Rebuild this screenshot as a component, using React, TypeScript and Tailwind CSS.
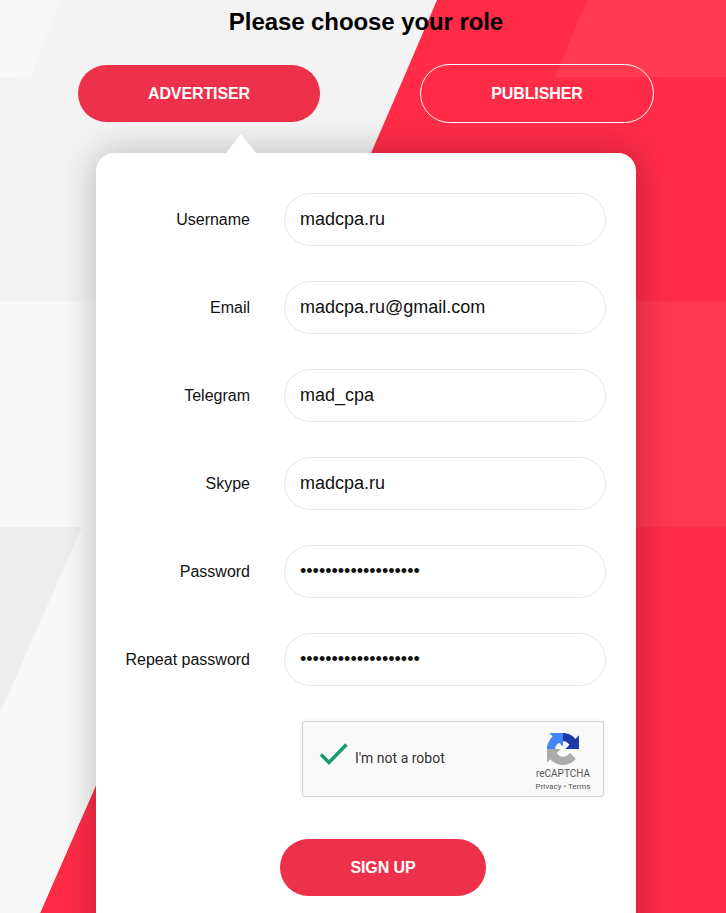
import React from "react";

const fields = [
  { label: "Username", value: "madcpa.ru" },
  { label: "Email", value: "madcpa.ru@gmail.com" },
  { label: "Telegram", value: "mad_cpa" },
  { label: "Skype", value: "madcpa.ru" },
  { label: "Password", value: "•••••••••••••••••••" },
  { label: "Repeat password", value: "•••••••••••••••••••" },
];

function Background() {
  return (
    <svg className="absolute inset-0 w-[726px] h-[913px]" viewBox="0 0 726 913">
      <defs>
        <linearGradient id="topLeft" x1="0" y1="0" x2="1" y2="0">
          <stop offset="0" stopColor="#f9f9f9" />
          <stop offset="1" stopColor="#f5f5f5" />
        </linearGradient>
      </defs>
      <rect x="0" y="0" width="726" height="913" fill="#ff2b47" />
      <rect x="0" y="301" width="726" height="226" fill="#ff374f" />
      <polygon points="587,0 726,0 726,77 555,77" fill="#ff3a51" />
      <polygon points="0,0 437,0 404,77 307,301 209,527 40,913 0,913" fill="#f3f3f3" />
      <polygon points="0,0 62,0 30,77 0,77" fill="url(#topLeft)" />
      <polygon points="0,301 307,301 209,527 0,527" fill="#f8f8f8" />
      <polygon points="209,527 40,913 0,913 0,527" fill="#f8f8f8" />
      <polygon points="0,527 82,527 0,713" fill="#eeeeee" />
    </svg>
  );
}

function RecaptchaLogo() {
  return (
    <svg width="32" height="32" viewBox="0 0 64 64">
      <path d="M64 31.955l-.033-1.37V4.687l-7.16 7.16C50.948 4.674 42.033.093 32.05.093c-10.4 0-19.622 4.96-25.458 12.64l11.736 11.86a15.55 15.55 0 0 1 4.754-5.334c2.05-1.6 4.952-2.906 8.968-2.906.485 0 .86.057 1.135.163 4.976.393 9.288 3.14 11.828 7.124l-8.307 8.307L64 31.953" fill="#1c3aa9" />
      <path d="M31.862.094l-1.37.033H4.594l7.16 7.16C4.58 13.147 0 22.06 0 32.046c0 10.4 4.96 19.622 12.64 25.458l11.86-11.736a15.55 15.55 0 0 1-5.334-4.754c-1.6-2.05-2.906-4.952-2.906-8.968 0-.485.057-.86.163-1.135.393-4.976 3.14-9.288 7.124-11.828l8.307 8.307L31.86.095" fill="#4285f4" />
      <path d="M.001 32.045l.033 1.37v25.898l7.16-7.16c5.86 7.173 14.774 11.754 24.76 11.754 10.4 0 19.622-4.96 25.458-12.64l-11.736-11.86a15.55 15.55 0 0 1-4.754 5.334c-2.05 1.6-4.952 2.906-8.968 2.906-.485 0-.86-.057-1.135-.163-4.976-.393-9.288-3.14-11.828-7.124l8.307-8.307L0 32.045" fill="#ababab" />
    </svg>
  );
}

export default function App() {
  return (
    <div className="relative w-[726px] h-[913px] overflow-hidden font-['Liberation_Sans',Arial,sans-serif]">
      <Background />
      <div className="relative flex flex-col w-[726px]">
        <h1 className="h-[44px] pl-[6px] text-center text-[24px] leading-[44px] font-bold text-black tracking-[-0.08px]">
          Please choose your role
        </h1>
        <div className="flex items-center pl-[78px] pt-[20px] h-[79px]">
          <button className="w-[242px] h-[57px] rounded-full bg-[#ee314b] text-white text-[16px] font-bold tracking-[-0.1px]">
            ADVERTISER
          </button>
          <button className="ml-[100px] w-[234px] h-[59px] rounded-full border border-white text-white text-[16px] font-bold tracking-[-0.1px]">
            PUBLISHER
          </button>
        </div>
        <div className="relative ml-[96px] mt-[30px] w-[540px] h-[800px] rounded-t-[18px] bg-white shadow-[0_0_36px_rgba(0,0,0,0.25)] pt-[40px]">
          <div className="absolute left-[130px] -top-[19px] w-0 h-0 border-x-[15px] border-x-transparent border-b-[19px] border-b-white" />
          <div className="flex flex-col gap-[35px]">
            {fields.map((f) => (
              <div key={f.label} className="flex items-center">
                <label className="w-[154px] text-right text-[16px] text-[#111111]">{f.label}</label>
                <input
                  readOnly
                  type="text"
                  value={f.value}
                  className="ml-[34px] w-[322px] h-[53px] rounded-full border border-[#e6e6e6] bg-white pl-[15px] pr-[16px] text-[18px] text-[#111111] outline-none"
                />
              </div>
            ))}
          </div>
          <div className="ml-[206px] mt-[35px] w-[302px] h-[76px] flex rounded-[3px] border border-[#d3d3d3] bg-[#f9f9f9] shadow-[0_0_4px_rgba(0,0,0,0.08)] font-['Roboto',sans-serif]">
            <svg className="ml-[16px] mt-[20px]" width="30" height="24" viewBox="0 0 30 24">
              <path d="M2 12.5 L10 20.5 L27.5 2.5" fill="none" stroke="#169c68" strokeWidth="3.4" />
            </svg>
            <span className="ml-[6px] mt-[26px] h-[20px] leading-[20px] text-[14px] text-[#333333]">I'm not a robot</span>
            <div className="ml-auto mr-[12px] mt-[11px] flex flex-col items-center w-[56px]">
              <RecaptchaLogo />
              <span className="mt-[3px] text-[10px] leading-[12px] text-[#555555]">reCAPTCHA</span>
              <span className="mt-[1px] text-[8px] leading-[12px] text-[#555555] whitespace-nowrap">Privacy • Terms</span>
            </div>
          </div>
          <button className="block ml-[184px] mt-[42px] w-[206px] h-[57px] rounded-full bg-[#ee314b] text-white text-[16px] font-bold tracking-[-0.1px]">
            SIGN UP
          </button>
        </div>
      </div>
    </div>
  );
}
